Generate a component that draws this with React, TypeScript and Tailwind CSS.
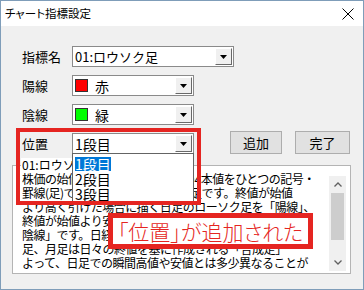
import React from 'react';

const RED = 'border-[#e52521]';

const ComboButton: React.FC = () => (
  <div className="w-[17px] h-full flex items-center justify-center bg-[#f0f0f0] border-t border-l border-t-white border-l-white border-b border-r border-b-[#696969] border-r-[#696969]">
    <svg width="7" height="4" viewBox="0 0 7 4">
      <path d="M0 0 L7 0 L3.5 4 Z" fill="#000" />
    </svg>
  </div>
);

interface ComboProps {
  width: string;
  size?: string;
  children: React.ReactNode;
}

const Combo: React.FC<ComboProps> = ({ width, size = 'text-[14px]', children }) => (
  <div className={`${width} h-[21px] flex items-stretch bg-white border border-[#8a8a8a] p-[1px]`}>
    <div className={`flex-1 flex items-center pl-[1px] ${size} text-black leading-none`}>{children}</div>
    <ComboButton />
  </div>
);

const Swatch: React.FC<{ color: string }> = ({ color }) => (
  <span className={`inline-block w-[13px] h-[13px] border border-[#333] mr-[7px] ${color}`} />
);

const descLines = [
  '株価の始値・高値・安値・終値の4本値をひとつの記号・',
  '罫線(足)で表したものがローソク足です。終値が始値',
  'より高く引けた場合に描く日足のローソク足を「陽線」、',
  '終値が始値より安く引けた場合に描くローソク足を「',
  '陰線」です。日経平均株価などの指数では、日足や週',
  '足、月足は日々の終値を基に作成される「合成足」',
  'よって、日足での瞬間高値や安値とは多少異なることが',
];

export default function App() {
  return (
    <div className="w-[364px] h-[290px] flex flex-col border border-[#7f9db9] bg-[#f0f0f0] overflow-hidden font-['Noto_Sans_CJK_JP','Noto_Sans',sans-serif] text-black">
      {/* title bar */}
      <div className="h-[25px] shrink-0 bg-white flex items-center justify-between pl-[4px] pr-[9px]">
        <span className="text-[11.5px] leading-none [font-feature-settings:'palt']">チャート指標設定</span>
        <svg width="12" height="12" viewBox="0 0 12 12">
          <path d="M0.5 0.5 L11.5 11.5 M11.5 0.5 L0.5 11.5" stroke="#000" strokeWidth="1" />
        </svg>
      </div>

      {/* body */}
      <div className="relative flex-1 pt-[20px]">
        <div className="flex flex-col gap-[8px] pl-[21px]">
          <div className="flex items-center">
            <span className="w-[50px] text-[13px] leading-none">指標名</span>
            <Combo width="w-[162px]" size="text-[13px]">01:ロウソク足</Combo>
          </div>
          <div className="flex items-center">
            <span className="w-[50px] text-[13px] leading-none">陽線</span>
            <Combo width="w-[122px]">
              <Swatch color="bg-[#ff0000]" />赤
            </Combo>
          </div>
          <div className="flex items-center">
            <span className="w-[50px] text-[13px] leading-none">陰線</span>
            <Combo width="w-[122px]">
              <Swatch color="bg-[#00ff00]" />緑
            </Combo>
          </div>
          <div className="flex items-center">
            <span className="w-[50px] text-[13px] leading-none">位置</span>
            <Combo width="w-[122px]">1段目</Combo>
            <button className="ml-[36px] -mt-[3px] w-[52px] h-[23px] bg-[#e1e1e1] border border-[#adadad] text-[13px] leading-none">追加</button>
            <button className="ml-[13px] -mt-[3px] w-[55px] h-[23px] bg-[#e1e1e1] border border-[#adadad] text-[13px] leading-none">完了</button>
          </div>
        </div>

        {/* group box with description */}
        <div className="relative ml-[11px] mt-[11px] w-[339px] h-[109px] flex bg-white border border-[#b4b4b4]">
          <span className="absolute left-[8px] -top-[8px] bg-white px-[1px] text-[12px] leading-[14px]">01:ロウソク足</span>
          <div className="flex-1 overflow-hidden pl-[9px] pt-[6px] text-[12px] tracking-[-0.5px] leading-[14px] whitespace-nowrap">
            {descLines.map((l) => (
              <div key={l}>{l}</div>
            ))}
          </div>
          <div className="w-[17px] flex flex-col bg-[#f0f0f0] mr-[4px] mt-[10px] mb-[2px]">
            <div className="h-[17px] flex items-center justify-center">
              <svg width="8" height="5" viewBox="0 0 8 5">
                <path d="M0.5 4.5 L4 1 L7.5 4.5" stroke="#606060" strokeWidth="1.3" fill="none" />
              </svg>
            </div>
            <div className="mx-[2px] h-[47px] bg-[#cdcdcd]" />
            <div className="flex-1" />
            <div className="h-[17px] flex items-center justify-center">
              <svg width="8" height="5" viewBox="0 0 8 5">
                <path d="M0.5 0.5 L4 4 L7.5 0.5" stroke="#606060" strokeWidth="1.3" fill="none" />
              </svg>
            </div>
          </div>
        </div>

        {/* dropdown list of 位置 */}
        <div className="absolute left-[71px] top-[127px] w-[122px] h-[50px] bg-white border border-[#646464] pt-[3px] pl-[2px] text-[14px] leading-[15px]">
          <div><span className="inline-block h-[14px] leading-[14px] bg-[#0078d7] text-white">1段目</span></div>
          <div>2段目</div>
          <div>3段目</div>
        </div>

        {/* highlight frame */}
        <div className={`absolute left-[15px] top-[102px] w-[185px] h-[77px] border-[4px] ${RED}`} />

        {/* callout */}
        <div className={`absolute left-[107px] top-[187px] w-[205px] h-[36px] border-[5px] ${RED} bg-white flex items-center justify-center text-[21px] font-light leading-none text-[#e52521] [font-feature-settings:'palt']`}>
          「位置」が追加された
        </div>
      </div>
    </div>
  );
}
